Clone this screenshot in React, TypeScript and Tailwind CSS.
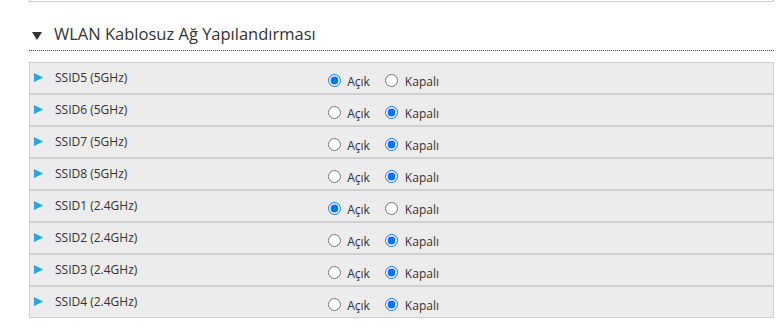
import React from 'react';

const rows = [
  { name: 'SSID5 (5GHz)', on: true },
  { name: 'SSID6 (5GHz)', on: false },
  { name: 'SSID7 (5GHz)', on: false },
  { name: 'SSID8 (5GHz)', on: false },
  { name: 'SSID1 (2.4GHz)', on: true },
  { name: 'SSID2 (2.4GHz)', on: false },
  { name: 'SSID3 (2.4GHz)', on: false },
  { name: 'SSID4 (2.4GHz)', on: false },
];

const App: React.FC = () => {
  return (
    <div className="w-[781px] h-[334px] bg-white overflow-hidden font-['Open_Sans','Noto_Sans',sans-serif] text-[#333]">
      <div className="ml-[29px] w-[745px]">
        {/* previous section box */}
        <div className="h-[2px] border-x border-b border-[#d0d0d0]" />

        {/* section heading */}
        <div className="mt-[23px] flex items-center h-[26px] border-b border-dotted border-[#444] pb-[1px]">
          <span className="ml-[3px] w-0 h-0 border-l-[5px] border-r-[5px] border-t-[8px] border-l-transparent border-r-transparent border-t-[#333] -mt-[3px]" />
          <h2 className="ml-[12px] text-[16.5px] leading-none -mt-[5px]">WLAN Kablosuz Ağ Yapılandırması</h2>
        </div>

        {/* SSID list */}
        <div className="mt-[11px]">
          {rows.map((r, i) => (
            <div
              key={r.name}
              className="flex h-[32px] bg-[#ececec] border border-[#d0d0d0] text-[12px]"
            >
              <div className="w-[40%] flex items-center pl-[4px]">
                <svg width="9" height="9" viewBox="0 0 9 9" className="-mt-[2px] shrink-0">
                  <polygon points="0,0 9,4.5 0,9" fill="#29a8e0" />
                </svg>
                <span className="ml-[12px]">{r.name}</span>
              </div>
              <div className="flex-1 flex items-center pl-[1px] pt-[4px]">
                <label className="flex items-center">
                  <input type="radio" name={'ssid' + i} defaultChecked={r.on} className="m-0 w-[13px] h-[13px]" />
                  <span className="ml-[6px] mt-[3px]">Açık</span>
                </label>
                <label className="flex items-center ml-[15px]">
                  <input type="radio" name={'ssid' + i} defaultChecked={!r.on} className="m-0 w-[13px] h-[13px]" />
                  <span className="ml-[7px] mt-[3px]">Kapalı</span>
                </label>
              </div>
            </div>
          ))}
        </div>
      </div>
    </div>
  );
};

export default App;
